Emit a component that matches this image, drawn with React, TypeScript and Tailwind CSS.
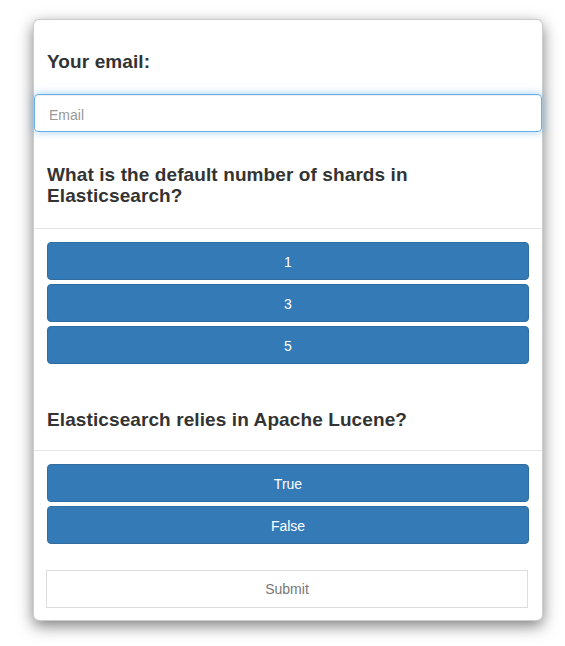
import React from "react";

const Q = ({ children, className = "" }: { children: React.ReactNode; className?: string }) => (
  <h4 className={`px-[13px] text-[19px] leading-[21px] font-bold tracking-[0.1px] text-[#333] ${className}`}>{children}</h4>
);

const Btn = ({ label }: { label: string }) => (
  <button className="h-[38px] w-full rounded-[4px] border border-[#2e6da4] bg-[#337ab7] pt-[2px] text-[14px] text-white">
    {label}
  </button>
);

export default function App() {
  return (
    <div
      className="min-h-screen bg-white pt-[19px] pl-[33px]"
      style={{ fontFamily: '"Liberation Sans", Arial, sans-serif' }}
    >
      <div className="w-[510px] rounded-[6px] border border-black/20 bg-white pb-[12px] shadow-[0_5px_15px_rgba(0,0,0,0.5)]">
        <Q className="mt-[31px]">Your email:</Q>
        <input
          type="email"
          placeholder="Email"
          className="mt-[22px] block h-[38px] w-full rounded-[4px] border border-[#66afe9] pl-[14px] pt-[3px] text-[14px] text-[#555] outline-none placeholder:text-[#999] shadow-[inset_0_1px_1px_rgba(0,0,0,0.075),0_0_8px_rgba(102,175,233,0.6)]"
        />
        <Q className="mt-[32px]">What is the default number of shards in Elasticsearch?</Q>
        <div className="mt-[22px] h-px bg-[#e5e5e5]" />
        <div className="mt-[13px] flex flex-col gap-[4px] px-[13px]">
          <Btn label="1" />
          <Btn label="3" />
          <Btn label="5" />
        </div>
        <Q className="mt-[45px]">Elasticsearch relies in Apache Lucene?</Q>
        <div className="mt-[20px] h-px bg-[#e5e5e5]" />
        <div className="mt-[13px] flex flex-col gap-[4px] px-[13px]">
          <Btn label="True" />
          <Btn label="False" />
        </div>
        <div className="mt-[26px] pl-[12px] pr-[14px]">
          <button
            disabled
            className="h-[38px] w-full border border-[#ddd] bg-white pt-[1px] text-[14px] text-[#777]"
          >
            Submit
          </button>
        </div>
      </div>
    </div>
  );
}
